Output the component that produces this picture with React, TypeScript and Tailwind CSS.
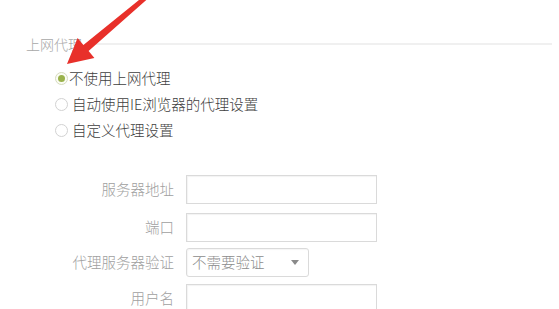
import React from 'react';

const font = { fontFamily: '"Noto Sans CJK SC", "Liberation Sans", sans-serif' };

function Radio({ checked, label }: { checked?: boolean; label: string }) {
    return (
        <label className="flex h-[26px] items-center">
            {checked ? (
                <span className="flex h-[13px] w-[13px] items-center justify-center rounded-full border border-[#d6dbbf] bg-[#fbfcf5]">
                    <span className="h-[7px] w-[7px] rounded-full bg-[#9ab24c]" />
                </span>
            ) : (
                <span className="h-[13px] w-[13px] rounded-full border border-[#d2d2d2] bg-white" />
            )}
            <span className={`${checked ? 'ml-[1px]' : 'ml-[4px]'} text-[14.5px] font-light leading-none text-[#404040]`}>{label}</span>
        </label>
    );
}

function Row({ label, className = '', children }: { label: string; className?: string; children: React.ReactNode }) {
    return (
        <div className={`flex items-center ${className}`}>
            <div className="w-[149px] pr-[1px] text-right text-[14.5px] font-light leading-none text-[#a0a0a0]">{label}</div>
            <div className="ml-[11px]">{children}</div>
        </div>
    );
}

function TextInput() {
    return (
        <div className="h-[29px] w-[191px] border border-[#dadada] bg-white shadow-[inset_1px_1px_1px_rgba(0,0,0,0.05)]" />
    );
}

export default function App() {
    return (
        <div className="relative h-[309px] w-[559px] overflow-hidden bg-white" style={font}>
            <div className="pl-[26px] pr-[7px] pt-[34px]">
                {/* section title */}
                <div className="flex h-[20px] items-center">
                    <span className="text-[14px] font-light leading-none text-[#a8a8a8]">上网代理</span>
                    <div className="ml-[4px] h-[2px] flex-1 bg-[#f0f0f0]" />
                </div>

                {/* proxy options */}
                <div className="ml-[29px] mt-[11px] flex flex-col">
                    <Radio checked label="不使用上网代理" />
                    <Radio label="自动使用IE浏览器的代理设置" />
                    <Radio label="自定义代理设置" />
                </div>

                {/* form */}
                <div className="mt-[32px] flex flex-col">
                    <Row label="服务器地址">
                        <TextInput />
                    </Row>
                    <Row label="端口" className="mt-[9px]">
                        <TextInput />
                    </Row>
                    <Row label="代理服务器验证" className="mt-[6px]">
                        <div className="flex h-[29px] w-[123px] items-center justify-between rounded-[3px] border border-[#dadada] bg-white pl-[5px] pr-[9px] shadow-[inset_1px_1px_1px_rgba(0,0,0,0.04)]">
                            <span className="text-[14.5px] font-light leading-none text-[#8c8c8c]">不需要验证</span>
                            <svg width="8" height="5" viewBox="0 0 8 5">
                                <path d="M0 0 L8 0 L4 5 Z" fill="#8a8a8a" />
                            </svg>
                        </div>
                    </Row>
                    <Row label="用户名" className="mt-[7px]">
                        <TextInput />
                    </Row>
                </div>
            </div>

            {/* red annotation arrow */}
            <svg className="pointer-events-none absolute left-0 top-0" width="559" height="309" viewBox="0 0 559 309">
                <polygon
                    points="67,64 94.4,58 88.6,51.1 152.5,-5.5 149.5,-8.5 83.4,44.9 77.6,38"
                    fill="#e8302a"
                />
            </svg>
        </div>
    );
}
